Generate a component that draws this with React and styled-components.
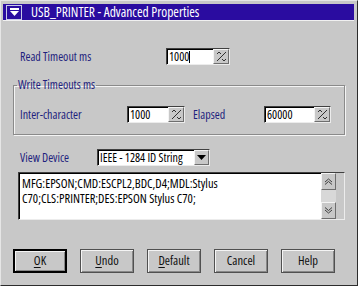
import React from 'react';
import styled, { createGlobalStyle } from 'styled-components';

const GlobalStyle = createGlobalStyle`
  html, body {
    margin: 0;
    padding: 0;
    background: #c8c8c8;
  }
  body {
    font-family: "Open Sans", "DejaVu Sans Condensed", sans-serif;
    font-stretch: condensed;
    font-size: 12px;
    line-height: 14px;
  }
`;

const Window = styled.div`
  box-sizing: border-box;
  width: 358px;
  height: 286px;
  background: #c8c8c8;
  border: 1px solid;
  border-color: #e6e6e6 #2c2c2c #2c2c2c #e6e6e6;
  padding: 3px 3px 0 2px;
  display: flex;
  flex-direction: column;
`;

const TitleBar = styled.div`
  height: 16px;
  background: #2a0ca0;
  display: flex;
  align-items: center;
  gap: 9px;
  padding-left: 3px;
  color: #ffffff;
  font-size: 13.5px;
  box-shadow: 0 1px 0 #f0f0f0;
`;

const SysIcon = styled.div`
  box-sizing: border-box;
  width: 16px;
  height: 15px;
  border: 1px solid #c8c8e8;
  display: flex;
  align-items: center;
  justify-content: center;
`;

const Content = styled.div`
  display: flex;
  flex-direction: column;
  padding: 0 9px 0 10px;
`;

const Row = styled.div`
  display: flex;
  align-items: center;
  padding-left: ${p => p.$indent ?? 7}px;
  margin-top: ${p => p.$top || 0}px;
`;

const Label = styled.span`
  box-sizing: border-box;
  width: ${p => p.$w}px;
  padding-left: ${p => p.$pad || 0}px;
  color: #1e1e7e;
  white-space: nowrap;
`;

const Field = styled.div`
  display: flex;
  box-sizing: border-box;
  height: 17px;
  border: 1px solid;
  border-color: #404040 #ececec #ececec #404040;
`;

const FieldText = styled.div`
  box-sizing: border-box;
  width: ${p => p.$w}px;
  background: #ffffff;
  color: #000000;
  padding-left: 1px;
  border-top: 1px solid #000;
  border-left: 1px solid #000;
  display: flex;
  align-items: center;
  white-space: nowrap;
  overflow: hidden;
`;

const Caret = styled.span`
  display: inline-block;
  width: 1px;
  height: 12px;
  background: #000;
`;

const BevelButton = styled.div`
  box-sizing: border-box;
  width: ${p => p.$w || 15}px;
  height: ${p => p.$h || 15}px;
  background: #c8c8c8;
  border: 1px solid;
  border-color: #f4f4f4 #6e6e6e #6e6e6e #f4f4f4;
  display: flex;
  align-items: center;
  justify-content: center;
`;

const Group = styled.fieldset`
  margin: 13px 0 0 0;
  padding: 0 0 0 6px;
  height: 57px;
  box-sizing: border-box;
  border: 1px solid #8a8a8a;
  box-shadow: inset 1px 1px 0 #f4f4f4, 1px 1px 0 #f4f4f4;
`;

const Legend = styled.legend`
  color: #1e1e7e;
  padding: 0 1px;
  margin-left: -3px;
  line-height: 14px;
`;

const ListBox = styled.div`
  display: flex;
  margin: 6px 0 0 5px;
  height: 48px;
  box-sizing: border-box;
  border: 1px solid;
  border-color: #404040 #ececec #ececec #404040;
`;

const ListText = styled.div`
  width: 302px;
  box-sizing: border-box;
  background: #ffffff;
  border-top: 1px solid #000;
  border-left: 1px solid #000;
  padding: 2px 2px;
  font-size: 12.5px;
  line-height: 15px;
  color: #000;
`;

const ScrollBar = styled.div`
  width: 15px;
  display: flex;
  flex-direction: column;
  justify-content: space-between;
  background: #d8d8d8;
`;

const ButtonBar = styled.div`
  display: flex;
  gap: 13px;
  margin-top: 29px;
`;

const PushButton = styled.div`
  box-sizing: border-box;
  width: 54px;
  height: 24px;
  background: #c8c8c8;
  color: #101010;
  display: flex;
  align-items: center;
  justify-content: center;
  font-size: 12.5px;
  border: ${p => (p.$default ? '2px solid #000' : '1px solid #505050')};
  box-shadow: inset 1px 1px 0 #f4f4f4, inset -1px -1px 0 #888888;
  u {
    text-underline-offset: 2px;
  }
`;

const SpinIcon = () => (
  <svg width="13" height="13" viewBox="0 0 13 13">
    <line x1="2" y1="11" x2="11" y2="2" stroke="#303030" strokeWidth="1" />
    <path d="M2 4 L4 2 L6 4" fill="none" stroke="#303030" />
    <path d="M7 9 L9 11 L11 9" fill="none" stroke="#303030" />
  </svg>
);

const SpinField = ({ value, width, caret }) => (
  <Field>
    <FieldText $w={width}>
      {value}
      {caret && <Caret />}
    </FieldText>
    <BevelButton $w={16} $h={15}>
      <SpinIcon />
    </BevelButton>
  </Field>
);

const Chevron = ({ up }) => (
  <svg width="9" height="7" viewBox="0 0 9 7">
    {up ? (
      <>
        <path d="M1 4 L4.5 1 L8 4" fill="none" stroke="#404040" />
        <path d="M1 6.5 L4.5 3.5 L8 6.5" fill="none" stroke="#404040" />
      </>
    ) : (
      <>
        <path d="M1 0.5 L4.5 3.5 L8 0.5" fill="none" stroke="#404040" />
        <path d="M1 3 L4.5 6 L8 3" fill="none" stroke="#404040" />
      </>
    )}
  </svg>
);

const App = () => {
  return (
    <>
      <GlobalStyle />
      <Window>
        <TitleBar>
          <SysIcon>
            <svg width="11" height="9" viewBox="0 0 11 9">
              <rect x="1" y="0" width="9" height="2" fill="#ffffff" />
              <path d="M1 3 L10 3 L5.5 8 Z" fill="#ffffff" />
            </svg>
          </SysIcon>
          <span>USB_PRINTER - Advanced Properties</span>
        </TitleBar>
        <Content>
          <Row $top={28}>
            <Label $w={146}>Read Timeout ms</Label>
            <SpinField value="1000" width={46} caret />
          </Row>

          <Group>
            <Legend>Write Timeouts ms</Legend>
            <Row $indent={0} $top={14}>
              <Label $w={107}>Inter-character</Label>
              <SpinField value="1000" width={40} />
              <Label $w={79} $pad={8}>Elapsed</Label>
              <SpinField value="60000" width={49} />
            </Row>
          </Group>

          <Row $top={14}>
            <Label $w={77}>View Device</Label>
            <Field>
              <FieldText $w={96}>IEEE - 1284 ID String</FieldText>
              <BevelButton $w={15} $h={15}>
                <svg width="9" height="6" viewBox="0 0 9 6">
                  <path d="M0 0 L9 0 L4.5 5 Z" fill="#000" />
                </svg>
              </BevelButton>
            </Field>
          </Row>

          <ListBox>
            <ListText>
              MFG:EPSON;CMD:ESCPL2,BDC,D4;MDL:Stylus
              <br />
              C70;CLS:PRINTER;DES:EPSON Stylus C70;
            </ListText>
            <ScrollBar>
              <BevelButton $w={15} $h={17}>
                <Chevron up />
              </BevelButton>
              <BevelButton $w={15} $h={17}>
                <Chevron />
              </BevelButton>
            </ScrollBar>
          </ListBox>

          <ButtonBar>
            <PushButton $default>
              <span><u>O</u>K</span>
            </PushButton>
            <PushButton>
              <span><u>U</u>ndo</span>
            </PushButton>
            <PushButton>
              <span><u>D</u>efault</span>
            </PushButton>
            <PushButton>Cancel</PushButton>
            <PushButton>Help</PushButton>
          </ButtonBar>
        </Content>
      </Window>
    </>
  );
};

export default App;
